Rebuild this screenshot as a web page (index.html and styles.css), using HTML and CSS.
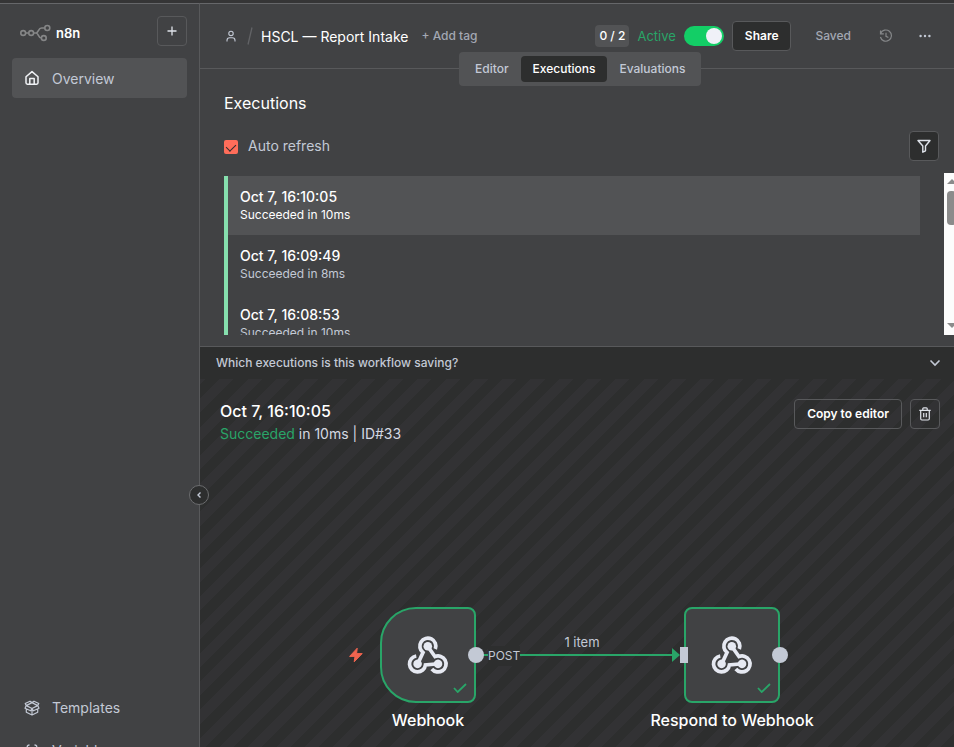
FILE: index.html
```html
<!DOCTYPE html>
<html lang="en">
<head>
<meta charset="utf-8">
<title>HSCL — Report Intake</title>
<link rel="stylesheet" href="styles.css">
</head>
<body>
<svg class="defs" aria-hidden="true">
  <defs>
    <g id="hook-arm">
      <path d="M29.3 15 A8 8 0 1 0 17 18.5 L11.7 30" fill="none" stroke="currentColor" stroke-width="3.7"/>
      <circle cx="21.8" cy="12.2" r="4.3" fill="currentColor"/>
    </g>
    <symbol id="webhook" viewBox="0 0 44 42">
      <use href="#hook-arm"/>
      <use href="#hook-arm" transform="rotate(120 21.8 24)"/>
      <use href="#hook-arm" transform="rotate(240 21.8 24)"/>
    </symbol>
    <symbol id="check" viewBox="0 0 14 10">
      <path d="M1 5 L4.7 9 L13 1" fill="none" stroke="currentColor" stroke-width="1.8"/>
    </symbol>
  </defs>
</svg>
<div class="app">
  <aside class="sidebar">
    <div class="brand-row">
      <a class="brand" href="#">
        <svg class="logo" width="32" height="18" viewBox="0 0 32 18" fill="none" stroke="currentColor" stroke-width="1.6">
          <circle cx="3.2" cy="9" r="2.4"/><circle cx="11.2" cy="9" r="2.4"/><circle cx="27.3" cy="4" r="2.5"/><circle cx="23.8" cy="14" r="2.4"/>
          <path d="M5.6 9H8.8M13.6 9H16M24.8 4H21.5C18 4 18.8 9 16 9C18.8 9 18 14 21.4 14"/>
        </svg>
        <span>n8n</span>
      </a>
      <button class="icon-button add" aria-label="Add">
        <svg width="12" height="12" viewBox="0 0 12 12" stroke="currentColor" stroke-width="1.3"><path d="M6 1.5V10.5M1.5 6H10.5"/></svg>
      </button>
    </div>
    <nav class="nav-main">
      <a class="nav-item current" href="#">
        <svg width="16" height="16" viewBox="0 0 16 16" fill="none" stroke="currentColor" stroke-width="1.5" stroke-linejoin="round"><path d="M2 6.8 8 1.6 14 6.8V12.8Q14 14.2 12.6 14.2H3.4Q2 14.2 2 12.8ZM5.8 14V8.5H10.2V14"/></svg>
        <span>Overview</span>
      </a>
    </nav>
    <nav class="nav-bottom">
      <a class="nav-item" href="#">
        <svg width="16" height="16" viewBox="0 0 16 16" fill="none" stroke="currentColor" stroke-width="1.2" stroke-linejoin="round"><path d="M8 8.5 2.3 5.6 1 8.2 6.6 10.8 8 8.5 9.4 10.8 15 8.2 13.7 5.6ZM2.3 5.6 1.2 3.5 6 1.2 8 2.6 10 1.2 14.8 3.5 13.7 5.6M8 2.6 2.3 5.6M8 2.6 13.7 5.6M2.3 9V12.2L8 15 13.7 12.2V9M8 8.5V15"/></svg>
        <span>Templates</span>
      </a>
      <a class="nav-item" href="#">
        <svg width="16" height="16" viewBox="0 0 16 16" fill="none" stroke="currentColor" stroke-width="1.3"><path d="M5.5 2Q3.2 2 3.2 4V6.2L1.4 8 3.2 9.8V12Q3.2 14 5.5 14M10.5 2Q12.8 2 12.8 4V6.2L14.6 8 12.8 9.8V12Q12.8 14 10.5 14"/></svg>
        <span>Variables</span>
      </a>
    </nav>
    <button class="collapse" aria-label="Collapse sidebar">
      <svg width="6" height="8" viewBox="0 0 6 8" fill="none" stroke="currentColor" stroke-width="1.4"><path d="M4.5 1.5 2 4 4.5 6.5"/></svg>
    </button>
  </aside>
  <main class="main">
    <header class="topbar">
      <svg class="owner" width="10" height="12" viewBox="0 0 10 12" fill="none" stroke="currentColor" stroke-width="1.1"><circle cx="5" cy="3.4" r="2.2"/><path d="M1 11.5V10.4Q1 7.8 3.6 7.8H6.4Q9 7.8 9 10.4V11.5"/></svg>
      <svg class="slash" width="6" height="18" viewBox="0 0 6 18" fill="none" stroke="currentColor" stroke-width="1.3"><path d="M5 .5 1 17.5"/></svg>
      <h1>HSCL — Report Intake</h1>
      <button class="add-tag">+ Add tag</button>
      <div class="actions">
        <span class="counter">0 / 2</span>
        <label class="active-label" for="active">Active</label>
        <input class="switch" type="checkbox" role="switch" id="active" checked>
        <button class="button share">Share</button>
        <span class="saved">Saved</span>
        <button class="plain history" aria-label="History">
          <svg width="14" height="14" viewBox="0 0 14 14" fill="none" stroke="currentColor" stroke-width="1.2"><path d="M1.5 1.5V4.8H4.8M1.6 4.6A5.6 5.6 0 1 1 1.4 8M7 3.8V7.3L9.4 8.5"/></svg>
        </button>
        <button class="plain more" aria-label="More">
          <svg width="12" height="4" viewBox="0 0 12 4" fill="currentColor"><circle cx="1.6" cy="2" r="1.2"/><circle cx="6" cy="2" r="1.2"/><circle cx="10.4" cy="2" r="1.2"/></svg>
        </button>
      </div>
      <nav class="tabs">
        <a href="#">Editor</a>
        <a href="#" class="selected">Executions</a>
        <a href="#">Evaluations</a>
      </nav>
    </header>
    <section class="executions">
      <h2>Executions</h2>
      <div class="controls">
        <input type="checkbox" class="tick" id="auto" checked>
        <label for="auto">Auto refresh</label>
        <button class="icon-button filter" aria-label="Filter">
          <svg width="14" height="14" viewBox="0 0 14 14" fill="none" stroke="currentColor" stroke-width="1.4" stroke-linejoin="round"><path d="M1 1.5H13L8.5 7V11.8L5.8 13.2V7Z"/></svg>
        </button>
      </div>
      <div class="list-area">
        <div class="list">
          <a class="run selected" href="#"><strong>Oct 7, 16:10:05</strong><span>Succeeded in 10ms</span></a>
          <a class="run" href="#"><strong>Oct 7, 16:09:49</strong><span>Succeeded in 8ms</span></a>
          <a class="run" href="#"><strong>Oct 7, 16:08:53</strong><span>Succeeded in 10ms</span></a>
        </div>
        <div class="scrollbar" aria-hidden="true"><i class="up"></i><i class="thumb"></i><i class="down"></i></div>
      </div>
    </section>
    <button class="accordion">
      <span>Which executions is this workflow saving?</span>
      <svg width="12" height="8" viewBox="0 0 12 8" fill="none" stroke="currentColor" stroke-width="1.6"><path d="M1.5 1.5 6 6 10.5 1.5"/></svg>
    </button>
    <section class="preview">
      <div class="preview-head">
        <div>
          <h3>Oct 7, 16:10:05</h3>
          <p><span class="ok">Succeeded</span> in 10ms | ID#33</p>
        </div>
        <div class="preview-buttons">
          <button class="button">Copy to editor</button>
          <button class="icon-button" aria-label="Delete">
            <svg width="12" height="14" viewBox="0 0 12 14" fill="none" stroke="currentColor" stroke-width="1.2"><path d="M.3 3.3H11.7M3.8 3V1.8Q3.8 .9 4.7 .9H7.3Q8.2 .9 8.2 1.8V3M1.7 3.3V11.8Q1.7 13 2.9 13H9.1Q10.3 13 10.3 11.8V3.3M4.7 6V10.3M7.3 6V10.3"/></svg>
          </button>
        </div>
      </div>
      <div class="canvas">
        <svg class="bolt" width="16" height="16" viewBox="0 0 16 16" fill="currentColor" stroke="currentColor" stroke-linejoin="round"><path d="M9.2 1.2 1.6 9.4H7L6.2 14.8 14.2 6.6H8.6Z"/></svg>
        <div class="wire"></div>
        <span class="wire-label">1 item</span>
        <div class="node trigger"><svg class="hook" width="44" height="42"><use href="#webhook"/></svg><svg class="done" width="14" height="10"><use href="#check"/></svg><i class="port out"></i></div>
        <span class="method">POST</span>
        <span class="node-name first">Webhook</span>
        <div class="node respond"><svg class="hook" width="44" height="42"><use href="#webhook"/></svg><svg class="done" width="14" height="10"><use href="#check"/></svg><i class="port in"></i><i class="port out"></i></div>
        <span class="node-name second">Respond to Webhook</span>
      </div>
    </section>
  </main>
</div>
</body>
</html>
```
FILE: styles.css
```css
:root {
  --surface: #414244;
  --raised: #525355;
  --dark: #2d2e2e;
  --line: #58595b;
  --muted: #c3c9d5;
  --green: #29a568;
}
* { box-sizing: border-box; }
body { margin: 0; font: 14px/20px Inter, sans-serif; color: #fff; background: var(--dark); }
h1, h2, h3, p { margin: 0; font-weight: 400; }
button { font: inherit; color: inherit; background: none; border: 0; padding: 0; }
a { color: inherit; text-decoration: none; }
svg { display: block; flex: none; }
.defs { position: absolute; width: 0; height: 0; }

.app { display: flex; height: 100vh; overflow: hidden; padding-top: 3px; background: #353536; }
.sidebar { position: relative; flex: 0 0 200px; display: flex; flex-direction: column; background: var(--surface); border-top: 1px solid #66676a; border-right: 1px solid var(--line); }
.main { flex: 1; min-width: 0; display: flex; flex-direction: column; background: var(--surface); border-top: 1px solid #66676a; }

.brand-row { display: flex; justify-content: space-between; align-items: center; padding: 12px 12px 12px 20px; }
.brand { display: flex; align-items: center; gap: 4px; font-size: 13px; font-weight: 600; padding-top: 4px; }
.logo { color: #858687; }
.icon-button { display: flex; align-items: center; justify-content: center; width: 30px; height: 30px; border: 1px solid var(--line); border-radius: 4px; flex: none; color: #dfe3ea; }
.nav-main { padding: 0 12px; }
.nav-bottom { margin-top: auto; display: flex; flex-direction: column; gap: 3px; padding: 0 12px; height: 59px; }
.nav-item { display: flex; flex: none; align-items: center; gap: 12px; height: 40px; padding: 0 12px; border-radius: 4px; color: var(--muted); }
.current { background: var(--raised); line-height: 22px; }
.current span { padding-top: 2px; }
.current svg { color: #f0f2f5; }
.collapse { position: absolute; right: -10px; top: 481px; width: 20px; height: 20px; border: 1px solid #6b6c6e; border-radius: 50%; background: var(--dark); color: var(--muted); display: flex; align-items: center; justify-content: center; z-index: 2; }

.topbar { position: relative; flex: none; display: flex; align-items: center; height: 65px; padding: 0 17px 0 26px; border-bottom: 1px solid var(--line); }
.owner { color: var(--muted); }
.slash { color: #626366; margin: 0 8px 0 11px; }
h1 { font-size: 14px; padding-top: 2px; }
.add-tag { margin-left: 13px; font-size: 12px; font-weight: 500; color: #a3a8b3; }
.actions { margin-left: auto; display: flex; align-items: center; }
.counter { padding: 1px 4px; border-radius: 4px; background: var(--raised); font-size: 12px; font-weight: 500; }
.active-label { margin: 0 8px; font-size: 13px; color: var(--green); }
.switch { appearance: none; margin: 0 8px 0 0; width: 40px; height: 20px; border-radius: 10px; background: #13ce66; display: flex; justify-content: flex-end; padding: 2px; }
.switch::before { content: ""; width: 16px; height: 16px; border-radius: 50%; background: #f0f1f8; }
.button { height: 30px; padding: 0 12px; border: 1px solid var(--line); border-radius: 4px; font-size: 12px; font-weight: 600; }
.share, .filter { background: var(--dark); }
.saved { margin-left: 24px; font-size: 12px; font-weight: 500; color: #a3a8b3; }
.plain { color: #858789; }
.history { margin-left: 28px; }
.more { margin-left: 26px; margin-right: 6px; color: var(--muted); }
.tabs { position: absolute; left: 259px; top: 48px; z-index: 1; display: flex; padding: 4px; background: var(--raised); border-radius: 4px; font-size: 12px; font-weight: 500; color: var(--muted); }
.tabs a { padding: 3px 12px; border-radius: 4px; }
.tabs .selected { background: var(--dark); color: #fff; }

.executions { flex: none; padding: 24px 0 11px 24px; border-bottom: 1px solid var(--line); overflow: hidden; }
h2 { font-size: 16px; }
.controls { display: flex; align-items: center; margin: 18px 15px 12px 0; color: var(--muted); }
.tick { appearance: none; margin: 1px 10px 0 0; width: 14px; height: 14px; border-radius: 2px; background: #ff6d5a; display: flex; justify-content: center; }
.tick::before { content: ""; margin-top: 2px; width: 5px; height: 8px; border: solid #2d2e2e; border-width: 0 1px 1px 0; transform: rotate(45deg); }
.filter { margin-left: auto; }
.list-area { display: flex; justify-content: space-between; height: 162px; }
.list { flex: 1; padding-top: 3px; overflow: hidden; }
.run { display: block; padding: 12px; border-left: 4px solid #86dfae; }
.run strong { display: block; font-weight: 500; line-height: 18px; }
.run span { display: block; font-size: 12px; line-height: 17px; color: var(--muted); }
.run.selected { background: var(--raised); }
.run.selected span { color: #fff; }
.scrollbar { margin-left: 24px; margin-right: -5px; width: 15px; display: flex; flex-direction: column; align-items: center; background: #fcfcfc; padding: 6px 0 7px; }
.up, .down { border: solid transparent; border-width: 0 5px; }
.up { border-bottom: 5px solid #8b8b8b; }
.down { border-top: 5px solid #8b8b8b; margin-top: auto; }
.thumb { width: 9px; height: 34px; margin-top: 7px; border-radius: 4px; background: #8b8b8b; }

.accordion { flex: none; display: flex; justify-content: space-between; align-items: center; height: 32px; padding: 0 13px 0 16px; background: var(--dark); font-size: 12px; font-weight: 500; color: var(--muted); text-align: left; }

.preview { flex: 1; min-height: 0; position: relative; overflow: hidden; background: repeating-linear-gradient(135deg, #323234 0 4px, #2d2e2e 4px 14px, #323234 14px 20px); }
.preview-head { display: flex; justify-content: space-between; padding: 20px 14px 0 20px; }
h3 { font-size: 16px; font-weight: 500; line-height: 24px; }
.preview-head p { line-height: 22px; color: #d5d9e2; }
.preview-head .ok { color: var(--green); }
.preview-buttons { display: flex; gap: 8px; }
.canvas { position: absolute; inset: 0; pointer-events: none; }
.canvas > * { position: absolute; }
.bolt { left: 148px; top: 268px; color: #f0644f; }
.node { top: 228px; width: 96px; height: 96px; border: 2px solid var(--green); background: var(--surface); border-radius: 8px; }
.trigger { left: 180px; border-radius: 36px 8px 8px 36px; }
.respond { left: 484px; }
.hook, .done, .port { position: absolute; }
.hook { left: 24px; top: 25px; color: #e6e9f2; }
.done { right: 7px; bottom: 8px; color: var(--green); }
.port { background: #c3c9d5; height: 16px; top: 38px; }
.out { width: 16px; right: -10px; border-radius: 50%; }
.in { width: 8px; left: -6px; }
.wire { left: 276px; top: 275px; width: 200px; height: 2px; background: var(--green); }
.wire::after { content: ""; position: absolute; right: -4px; top: -6px; border: solid transparent; border-width: 7px 0 7px 8px; border-left-color: var(--green); }
.wire-label { left: 382px; top: 253px; transform: translateX(-50%); font-size: 13px; color: var(--muted); white-space: nowrap; }
.method { left: 288px; top: 267px; font-size: 12px; color: var(--muted); background: var(--dark); }
.node-name { top: 330px; transform: translateX(-50%); font-size: 16px; line-height: 22px; font-weight: 500; white-space: nowrap; }
.first { left: 228px; }
.second { left: 532px; }
```
